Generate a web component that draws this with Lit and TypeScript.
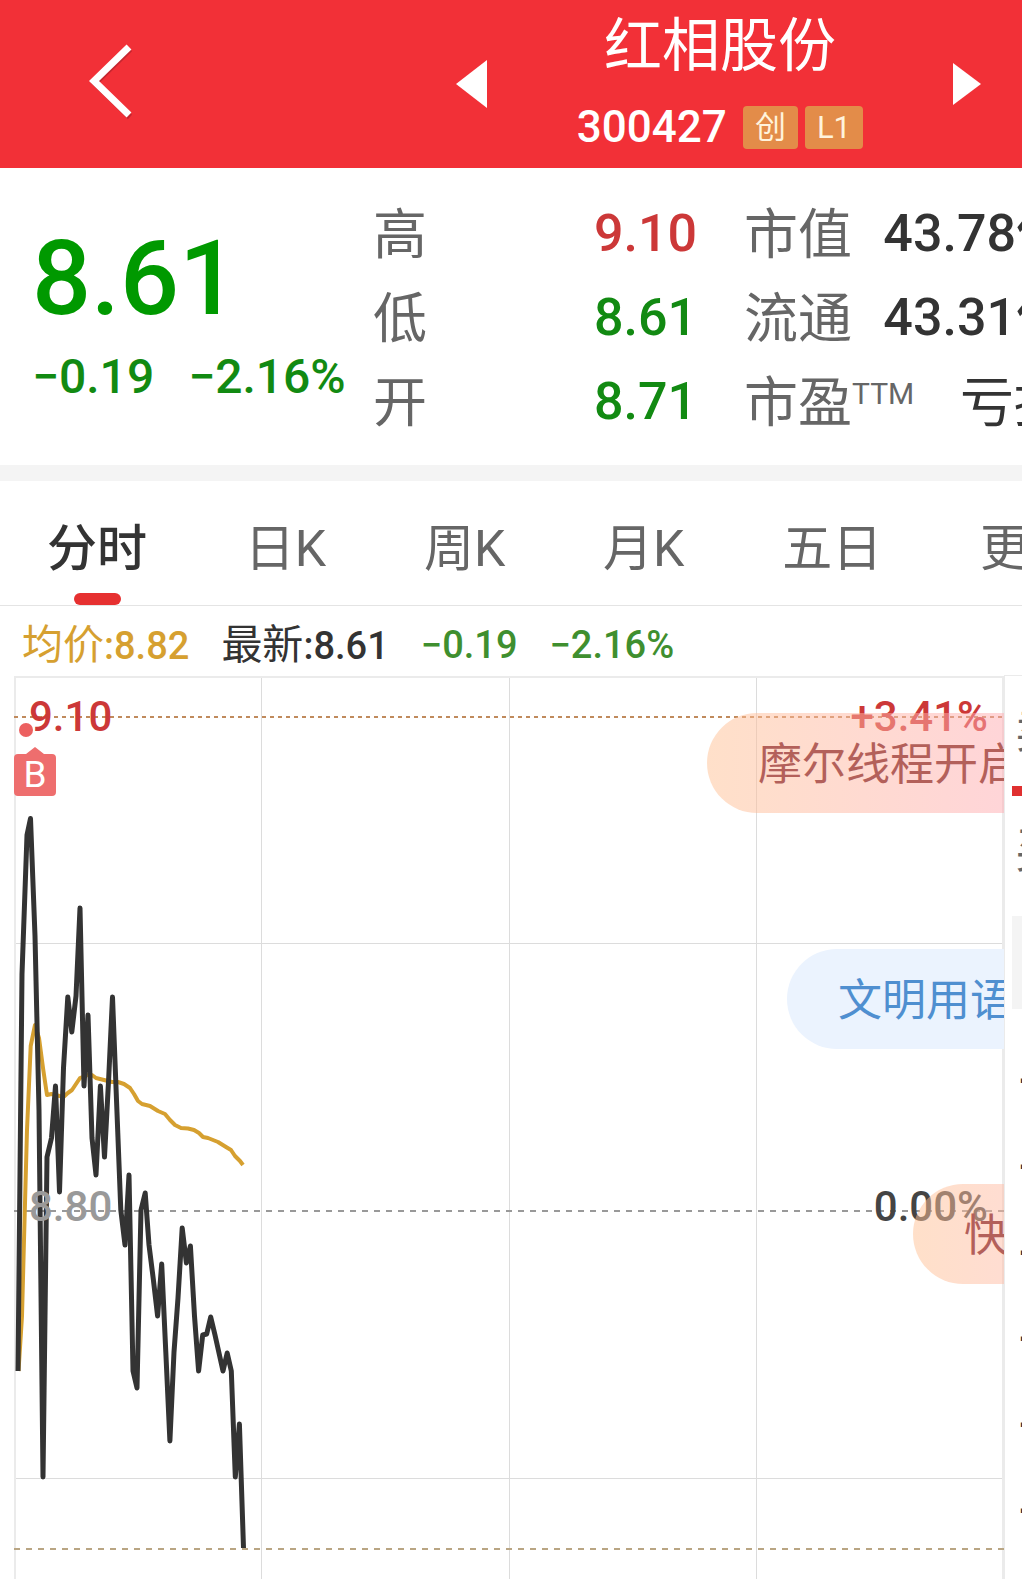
import { LitElement, html, svg, css } from "lit";
import { customElement, property, state } from "lit/decorators.js";
import { classMap } from "lit/directives/class-map.js";

const PRICE_POINTS = `4,695 8,298 13,159 16.5,142.5 21,260 25,434 29,801 33,481 37.5,462 41.5,410 45.5,516 49.5,392
53.8,321 57.8,356 62,320 66,232 70,410 74,339 78,462 82,499 86.4,410 90.5,481 94.6,404 98.5,321 102.5,424
106.8,534 111,569 115,499 119,695 123,712 127,534 131.2,517 135,569 139.4,604 143.6,640 147.7,588 151.8,676
155.9,765 160,676 164,622 168.2,552 172.4,587 176.4,570 180.5,640 184.6,695 188.7,659 192.7,658 196.7,641
201,659 209,695 213.2,677 217.3,695 221.3,801 225.4,748 229.5,872`;

const AVERAGE_POINTS = `4.5,695 8,640 10,564 13,454 16.7,370 21,349 25,362 29,392 33,419 37.5,418 49.5,421 53.8,417
58,414 62,408 66,402 74,399 78,399 82,402 90,404 98,406 104,406 110,408 116,412 120,418 124,425 128,428
136,430 144,435 151,438 156,444 161,449 167,452 174,452.5 180,454 185,457 189,461 194,462 204,466 212,471
217,474 221,480 226,485 229,489`;

@customElement("quote-header")
class QuoteHeader extends LitElement {
  @property() name = "";
  @property() code = "";

  static styles = css`
    :host { display: block; background: #f23037; color: #fff; }
    .bar { display: flex; align-items: center; justify-content: space-between; height: 168px; padding: 0 41px 0 89px; }
    button { border: 0; padding: 0; margin: 0; background: none; color: inherit; display: flex; }
    .back { padding-bottom: 6px; }
    .switcher { display: flex; align-items: center; gap: 90px; }
    .title { display: flex; flex-direction: column; align-items: center; gap: 24px; padding-bottom: 6px; }
    h1 { margin: 0; font-size: 58px; line-height: 68px; font-weight: 400; }
    .meta { display: flex; align-items: center; gap: 7px; line-height: 43px; }
    .code { font-size: 44px; font-weight: 500; line-height: 46px; margin-right: 9px; }
    .badge { background: #e38c49; color: #fff3dc; border-radius: 4px; font-size: 31px; padding: 0 12px; }
  `;

  render() {
    return html`
      <header class="bar">
        <button class="back" aria-label="返回">
          <svg width="44" height="80" viewBox="0 0 44 80" fill="none">
            <path d="M41 8 6 42l35 34" stroke="#a8202a" stroke-opacity=".6" stroke-width="6" />
            <path d="M40 6 5 40l35 34" stroke="#fff" stroke-width="7" />
          </svg>
        </button>
        <div class="switcher">
          <button aria-label="上一只">
            <svg width="31" height="48" viewBox="0 0 31 48"><path d="M31 0v48L0 24z" fill="#fff" /></svg>
          </button>
          <div class="title">
            <h1>${this.name}</h1>
            <div class="meta">
              <span class="code">${this.code}</span>
              <span class="badge">创</span>
              <span class="badge">L1</span>
            </div>
          </div>
          <button aria-label="下一只">
            <svg width="28" height="42" viewBox="0 0 28 42"><path d="M0 0v42l28-21z" fill="#fff" /></svg>
          </button>
        </div>
      </header>
    `;
  }
}

@customElement("quote-summary")
class QuoteSummary extends LitElement {
  static styles = css`
    :host { display: block; overflow: hidden; border-bottom: 16px solid #f4f4f4; }
    .summary { display: grid; grid-template-columns: 341fr 324fr 325fr; padding: 24px 0 21px 32px; }
    .last { color: #009900; padding-top: 32px; }
    .price { font-size: 104px; line-height: 110px; font-weight: 500; }
    .change { display: flex; gap: 34px; font-size: 48px; line-height: 86px; color: #128a12; font-weight: 500; white-space: nowrap; }
    dl { margin: 0; font-size: 54px; line-height: 88px; color: #666; white-space: nowrap; }
    dl div { display: flex; justify-content: space-between; height: 84px; }
    dd { margin: 0; font-weight: 500; font-size: 52px; line-height: 84px; color: #333; }
    .right { padding-left: 47px; margin-right: -46px; }
    .up { color: #cc3838; }
    .down { color: #128a12; }
    .word { font-weight: 400; font-size: 54px; line-height: 88px; }
    sup { font-size: 30px; line-height: 30px; vertical-align: 18px; }
  `;

  render() {
    return html`
      <section class="summary">
        <div class="last">
          <div class="price">8.61</div>
          <div class="change"><span>−0.19</span><span>−2.16%</span></div>
        </div>
        <dl>
          <div><dt>高</dt><dd class="up">9.10</dd></div>
          <div><dt>低</dt><dd class="down">8.61</dd></div>
          <div><dt>开</dt><dd class="down">8.71</dd></div>
        </dl>
        <dl class="right">
          <div><dt>市值</dt><dd>43.78亿</dd></div>
          <div><dt>流通</dt><dd>43.31亿</dd></div>
          <div><dt>市盈<sup>TTM</sup></dt><dd class="word">亏损</dd></div>
        </dl>
      </section>
    `;
  }
}

@customElement("period-tabs")
class PeriodTabs extends LitElement {
  @state() private active = 0;
  private labels = ["分时", "日K", "周K", "月K", "五日", "更多"];

  static styles = css`
    :host { display: block; overflow: hidden; border-bottom: 1px solid #e4e4e4; }
    .tabs { display: flex; justify-content: space-between; height: 124px; padding-left: 47px; margin-right: -58px; }
    button {
      position: relative; border: 0; margin: 0; padding: 0; background: none; white-space: nowrap;
      font: 400 50px/136px Roboto, "Noto Sans CJK SC", sans-serif; height: 124px; color: #666;
    }
    .active { font-weight: 500; color: #333; }
    .active::after {
      content: ""; position: absolute; left: 50%; bottom: 0; width: 47px; height: 12px;
      margin-left: -23px; border-radius: 6px; background: #e63030;
    }
  `;

  render() {
    return html`
      <div class="tabs" role="tablist">
        ${this.labels.map((label, i) => html`
          <button role="tab" aria-selected=${i === this.active} class=${classMap({ active: i === this.active })}
            @click=${() => (this.active = i)}>${label}</button>`)}
      </div>
    `;
  }
}

@customElement("minute-chart")
class MinuteChart extends LitElement {
  static styles = css`
    :host { display: block; flex: 1; min-width: 0; }
    .chart { position: relative; overflow: hidden; height: 903px; }
    .plot { display: block; width: 100%; height: 903px; }
    .plot * { vector-effect: non-scaling-stroke; }
    .label { position: absolute; font-size: 42px; line-height: 46px; font-weight: 500; }
    .start { left: 15px; }
    .end { right: 16px; }
    .top { top: 18px; color: #cc3838; }
    .middle { top: 508px; }
    .base { color: #999; }
    .zero { color: #444; }
    .dot { position: absolute; left: 5px; top: 47px; width: 14px; height: 14px; border-radius: 50%; background: #ec6060; }
    .marker { position: absolute; left: 0; top: 71px; }
    .marker text { font: 400 37px Roboto, sans-serif; fill: #fff; }
    .bubble {
      position: absolute; height: 100px; padding-left: 51px; border-radius: 50px 0 0 50px; right: 0;
      font-size: 44px; line-height: 104px; white-space: nowrap; box-sizing: border-box;
    }
    .warm { color: #b3605a; }
    .hot { top: 37px; left: calc(100% - 297px); background: linear-gradient(90deg, rgba(255, 193, 148, .5), rgba(255, 171, 177, .5)); }
    .cool { top: 273px; left: calc(100% - 217px); background: #ebf3fe; color: #4f8fd0; }
    .fast { top: 508px; left: calc(100% - 91px); background: linear-gradient(90deg, rgba(255, 193, 148, .5), rgba(255, 187, 164, .5)); }
  `;

  render() {
    return html`
      <div class="chart">
        <svg class="plot" viewBox="0 0 990 903" preserveAspectRatio="none" fill="none" role="img" aria-label="分时走势">
          ${[247.5, 495.5, 742.5].map((x) => svg`<path d="M${x} 0V903" stroke="#dcdcdc" />`)}
          ${[267.5, 802.5].map((y) => svg`<path d="M0 ${y}H990" stroke="#dcdcdc" />`)}
          <path d="M1 903V1H989V903" stroke="#ebebeb" stroke-width="2" />
          <path d="M0 41H990" stroke="#c08a5c" stroke-width="2" stroke-dasharray="4 4" />
          <path d="M0 535H990" stroke="#999" stroke-width="2" stroke-dasharray="6 6" />
          <path d="M0 873H990" stroke="#b9a583" stroke-width="2" stroke-dasharray="6 6" />
          <polyline points=${AVERAGE_POINTS} stroke="#d6a030" stroke-width="4" stroke-linejoin="round" />
          <polyline points=${PRICE_POINTS} stroke="#333" stroke-width="5" stroke-linejoin="round" />
        </svg>
        <span class="label start top">9.10</span>
        <span class="label end top">+3.41%</span>
        <span class="label start middle base">8.80</span>
        <span class="label end middle zero">0.00%</span>
        <span class="dot"></span>
        <svg class="marker" width="42" height="49" viewBox="0 0 42 49">
          <path d="M12 7 21 0l9 7h8a4 4 0 0 1 4 4v34a4 4 0 0 1-4 4H4a4 4 0 0 1-4-4V11a4 4 0 0 1 4-4z" fill="#ee6e6e" />
          <text x="21" y="40" text-anchor="middle">B</text>
        </svg>
        <div class="bubble warm hot">摩尔线程开启</div>
        <div class="bubble cool">文明用语</div>
        <div class="bubble warm fast">快</div>
      </div>
    `;
  }
}

@customElement("order-panel")
class OrderPanel extends LitElement {
  static styles = css`
    :host {
      display: block; flex: none; width: 18px; height: 904px; overflow: hidden; box-sizing: border-box; margin-top: -1px;
      border-left: 1px solid #ebebeb; border-top: 1px solid #ebebeb; font-size: 48px; color: #666; white-space: nowrap;
    }
    .side { padding-left: 10px; line-height: 110px; }
    .mark { height: 10px; margin-left: 7px; background: #e03030; }
    .block { height: 93px; margin: 10px 0 27px 7px; background: #f4f4f4; }
    .row { height: 86px; line-height: 86px; padding-left: 14px; color: #333; font-weight: 500; }
  `;

  render() {
    return html`
      <div class="side">卖</div>
      <div class="mark"></div>
      <div class="side">买</div>
      <div class="block"></div>
      ${[1, 2, 3, 4, 5, 6].map(() => html`<div class="row">-</div>`)}
    `;
  }
}

@customElement("app-root")
class AppRoot extends LitElement {
  static styles = css`
    :host { display: block; overflow: hidden; background: #fff; font-family: Roboto, "Noto Sans CJK SC", sans-serif; }
    .legend { display: flex; gap: 32px; height: 70px; padding-left: 22px; line-height: 78px; font-size: 38px; font-weight: 500; color: #333; white-space: nowrap; }
    .cjk { font-weight: 400; font-size: 41px; }
    .average { color: #d6a030; }
    .fall { color: #3f8f2f; }
    .body { display: flex; align-items: flex-start; padding-left: 14px; }
  `;

  render() {
    return html`
      <quote-header name="红相股份" code="300427"></quote-header>
      <main>
        <quote-summary></quote-summary>
        <period-tabs></period-tabs>
        <div class="legend">
          <span class="average"><span class="cjk">均价</span>:8.82</span>
          <span><span class="cjk">最新</span>:8.61</span>
          <span class="fall">−0.19</span>
          <span class="fall">−2.16%</span>
        </div>
        <div class="body">
          <minute-chart></minute-chart>
          <order-panel></order-panel>
        </div>
      </main>
    `;
  }
}
